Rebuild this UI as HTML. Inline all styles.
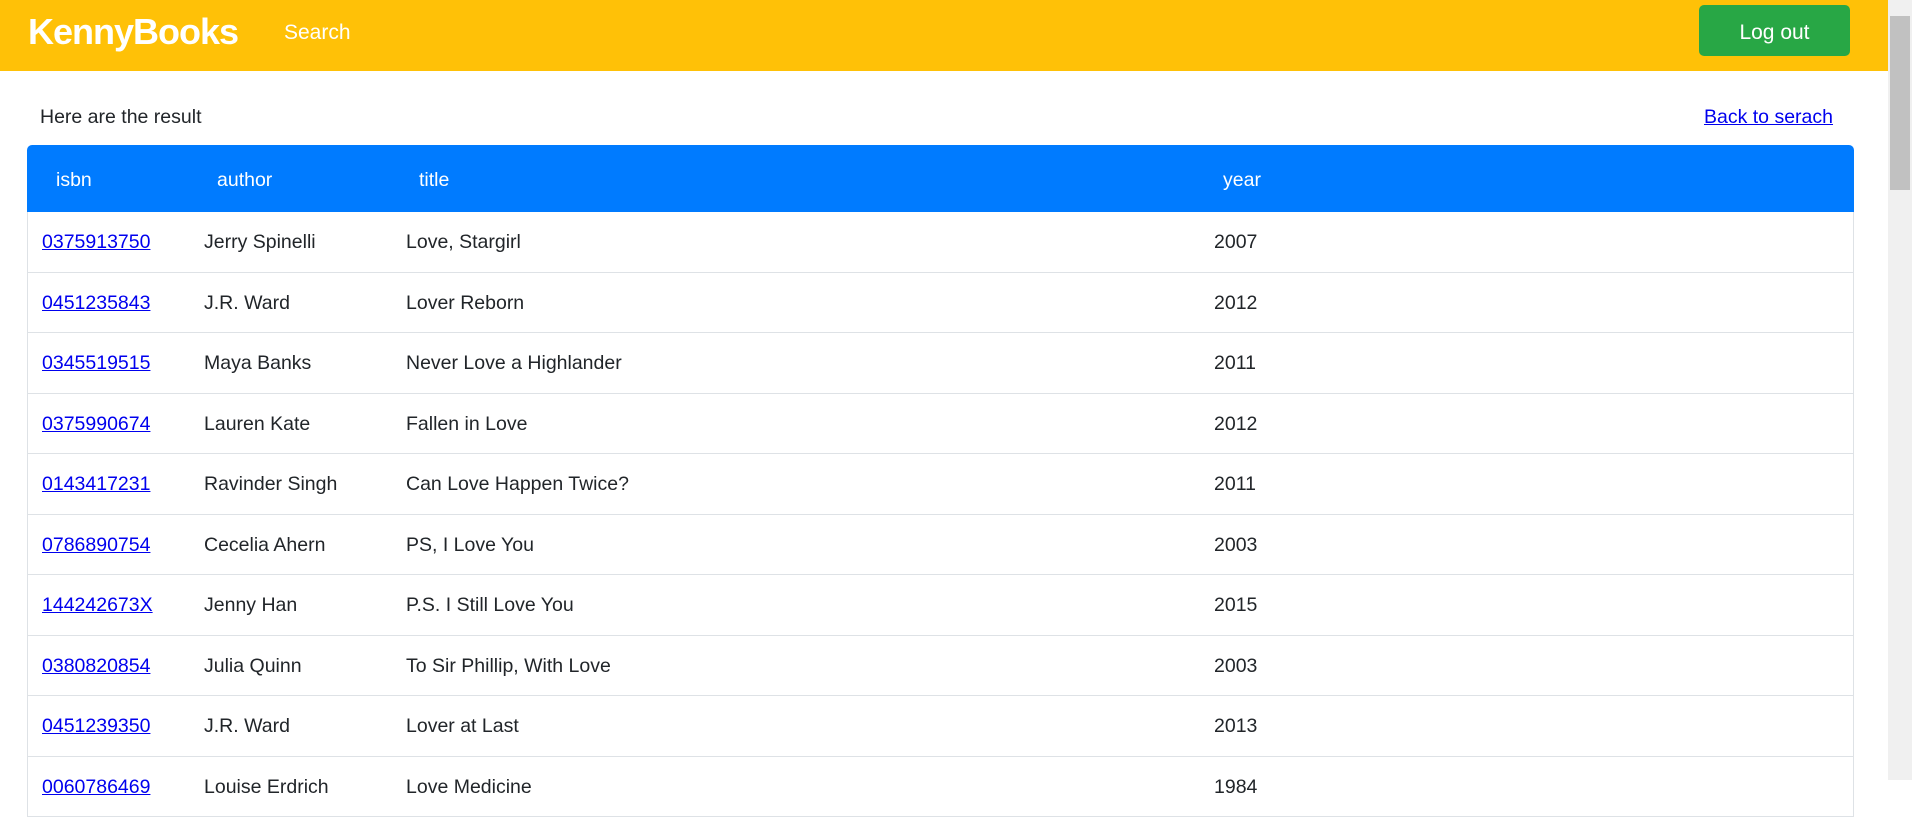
<!DOCTYPE html>
<html><head><meta charset="utf-8"><style>
body{margin:0;width:1912px;height:780px;overflow:hidden;font-family:"Liberation Sans",sans-serif;background:#fff;color:#212529;position:relative}
.nav{position:absolute;left:0;top:0;width:1888px;height:71px;background:#ffc107}
.brand{position:absolute;left:28px;top:11px;font-size:36px;color:#fff;font-weight:bold;letter-spacing:-1px}
.search{position:absolute;left:284px;top:21px;font-size:21px;color:#fff}
.btn{position:absolute;left:1699px;top:5px;width:151px;height:51px;background:#28a745;border-radius:5px;color:#fff;font-size:21px;text-align:center;line-height:55px}
.sb{position:absolute;left:1888px;top:0;width:24px;height:780px;background:#f0f0f0}
.thumb{position:absolute;left:1890px;top:16px;width:20px;height:174px;background:#c1c1c1}
.res{position:absolute;left:40px;top:106px;font-size:19.5px}
.back{position:absolute;left:1704px;top:106px;font-size:19.5px;color:#0000ee;text-decoration:underline}
.head{position:absolute;left:27px;top:145px;width:1827px;height:67px;background:#007bff;border-radius:5px 5px 0 0;color:#fff;font-size:19.5px}
.head span{position:absolute;top:24px}
.rows{position:absolute;left:27px;top:212px;width:1825px;border-left:1px solid #dee2e6;border-right:1px solid #dee2e6;font-size:19.5px}
.row{height:59.5px;border-bottom:1px solid #dee2e6;position:relative}
.row span{position:absolute;top:19px}
.row a{position:absolute;top:19px;left:14px;color:#0000ee;text-decoration:underline}
</style></head><body>
<div class="nav"><div class="brand">KennyBooks</div><div class="search">Search</div><div class="btn">Log out</div></div>
<div class="sb"></div><div class="thumb"></div>
<div class="res">Here are the result</div>
<a class="back">Back to serach</a>
<div class="head"><span style="left:29px">isbn</span><span style="left:190px">author</span><span style="left:392px">title</span><span style="left:1196px">year</span></div>
<div class="rows">
<div class="row"><a>0375913750</a><span style="left:176px">Jerry Spinelli</span><span style="left:378px">Love, Stargirl</span><span style="left:1186px">2007</span></div>
<div class="row"><a>0451235843</a><span style="left:176px">J.R. Ward</span><span style="left:378px">Lover Reborn</span><span style="left:1186px">2012</span></div>
<div class="row"><a>0345519515</a><span style="left:176px">Maya Banks</span><span style="left:378px">Never Love a Highlander</span><span style="left:1186px">2011</span></div>
<div class="row"><a>0375990674</a><span style="left:176px">Lauren Kate</span><span style="left:378px">Fallen in Love</span><span style="left:1186px">2012</span></div>
<div class="row"><a>0143417231</a><span style="left:176px">Ravinder Singh</span><span style="left:378px">Can Love Happen Twice?</span><span style="left:1186px">2011</span></div>
<div class="row"><a>0786890754</a><span style="left:176px">Cecelia Ahern</span><span style="left:378px">PS, I Love You</span><span style="left:1186px">2003</span></div>
<div class="row"><a>144242673X</a><span style="left:176px">Jenny Han</span><span style="left:378px">P.S. I Still Love You</span><span style="left:1186px">2015</span></div>
<div class="row"><a>0380820854</a><span style="left:176px">Julia Quinn</span><span style="left:378px">To Sir Phillip, With Love</span><span style="left:1186px">2003</span></div>
<div class="row"><a>0451239350</a><span style="left:176px">J.R. Ward</span><span style="left:378px">Lover at Last</span><span style="left:1186px">2013</span></div>
<div class="row"><a>0060786469</a><span style="left:176px">Louise Erdrich</span><span style="left:378px">Love Medicine</span><span style="left:1186px">1984</span></div>
</div>
</body></html>
